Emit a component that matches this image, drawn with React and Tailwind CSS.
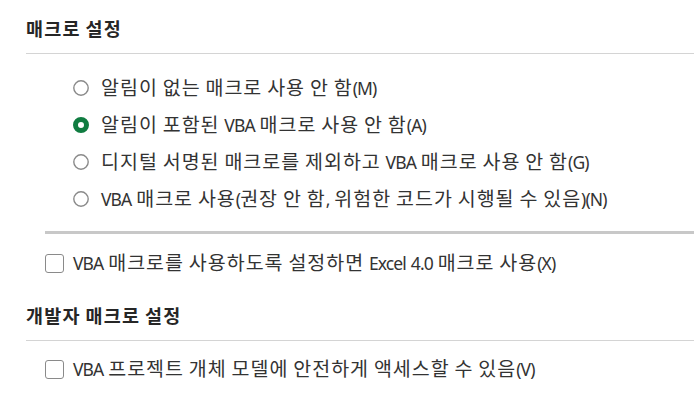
import { useState } from "react";

const LATIN = { fontFamily: '"Noto Sans", "Noto Sans CJK KR", sans-serif' };
const HANGUL = { fontFamily: '"Noto Sans CJK KR", "Noto Sans", sans-serif' };

const macroOptions = [
  { id: "M", label: "알림이 없는 매크로 사용 안 함(M)" },
  { id: "A", label: "알림이 포함된 VBA 매크로 사용 안 함(A)" },
  { id: "G", label: "디지털 서명된 매크로를 제외하고 VBA 매크로 사용 안 함(G)" },
  { id: "N", label: "VBA 매크로 사용(권장 안 함, 위험한 코드가 시행될 수 있음)(N)" },
];

// Hangul runs are set a little larger than the Latin runs around them,
// the way the dialog's UI font pairs with its Korean fallback.
function MixedText({ text, bold }) {
  const parts = text.split(/([\uac00-\ud7a3]+)/).filter(Boolean);
  return (
    <span className={bold ? "font-bold text-[#262626]" : "text-[#333333]"}>
      {parts.map((p, i) =>
        /[\uac00-\ud7a3]/.test(p) ? (
          <span
            key={i}
            style={HANGUL}
            className={bold ? "text-[18.5px] tracking-[1.2px]" : "text-[19.5px] tracking-[1px]"}
          >
            {p}
          </span>
        ) : (
          <span key={i} style={LATIN} className="text-[17.5px] tracking-[-0.9px] [word-spacing:1.2px]">
            {p}
          </span>
        )
      )}
    </span>
  );
}

function Radio({ checked }) {
  return (
    <svg width="16" height="16" viewBox="0 0 16 16" className="shrink-0">
      {checked ? (
        <circle cx="8" cy="8" r="5.5" fill="none" stroke="#107c41" strokeWidth="5" />
      ) : (
        <circle cx="8" cy="8" r="7.2" fill="#fff" stroke="#8a8a8a" strokeWidth="1.4" />
      )}
    </svg>
  );
}

function Checkbox({ checked, onChange, label }) {
  return (
    <label className="flex h-[36px] items-center gap-[9px] cursor-pointer leading-[24px]">
      <span
        onClick={onChange}
        className={`w-[19px] h-[19px] shrink-0 rounded-[3px] border-[1.5px] ${
          checked ? "border-[#107c41] bg-[#107c41]" : "border-[#8a8a8a] bg-white"
        }`}
      />
      <MixedText text={label} />
    </label>
  );
}

export default function App() {
  const [macro, setMacro] = useState("A");
  const [excel4, setExcel4] = useState(false);
  const [vbaAccess, setVbaAccess] = useState(false);

  return (
    <div className="w-[694px] h-[411px] bg-white overflow-hidden pl-[26px]" style={LATIN}>
      <div className="pt-[17px] pb-[12px] border-b border-[#d4d4d4]">
        <h2 className="h-[24px] leading-[24px] flex items-center">
          <MixedText text="매크로 설정" bold />
        </h2>
      </div>

      <div className="mt-[15px] pl-[47px]">
        {macroOptions.map((o) => (
          <div
            key={o.id}
            onClick={() => setMacro(o.id)}
            className="flex h-[37px] items-center gap-[12px] cursor-pointer leading-[24px]"
          >
            <Radio checked={macro === o.id} />
            <MixedText text={o.label} />
          </div>
        ))}
      </div>

      <div className="mt-[14px] ml-[19px] h-[3px] bg-[#c8c8c8]" />

      <div className="mt-[11px] ml-[19px]">
        <Checkbox
          checked={excel4}
          onChange={() => setExcel4(!excel4)}
          label="VBA 매크로를 사용하도록 설정하면 Excel 4.0 매크로 사용(X)"
        />
      </div>

      <div className="mt-[23px] pb-[12px] border-b border-[#d4d4d4]">
        <h2 className="h-[24px] leading-[24px] flex items-center">
          <MixedText text="개발자 매크로 설정" bold />
        </h2>
      </div>

      <div className="mt-[10px] ml-[19px]">
        <Checkbox
          checked={vbaAccess}
          onChange={() => setVbaAccess(!vbaAccess)}
          label="VBA 프로젝트 개체 모델에 안전하게 액세스할 수 있음(V)"
        />
      </div>
    </div>
  );
}
